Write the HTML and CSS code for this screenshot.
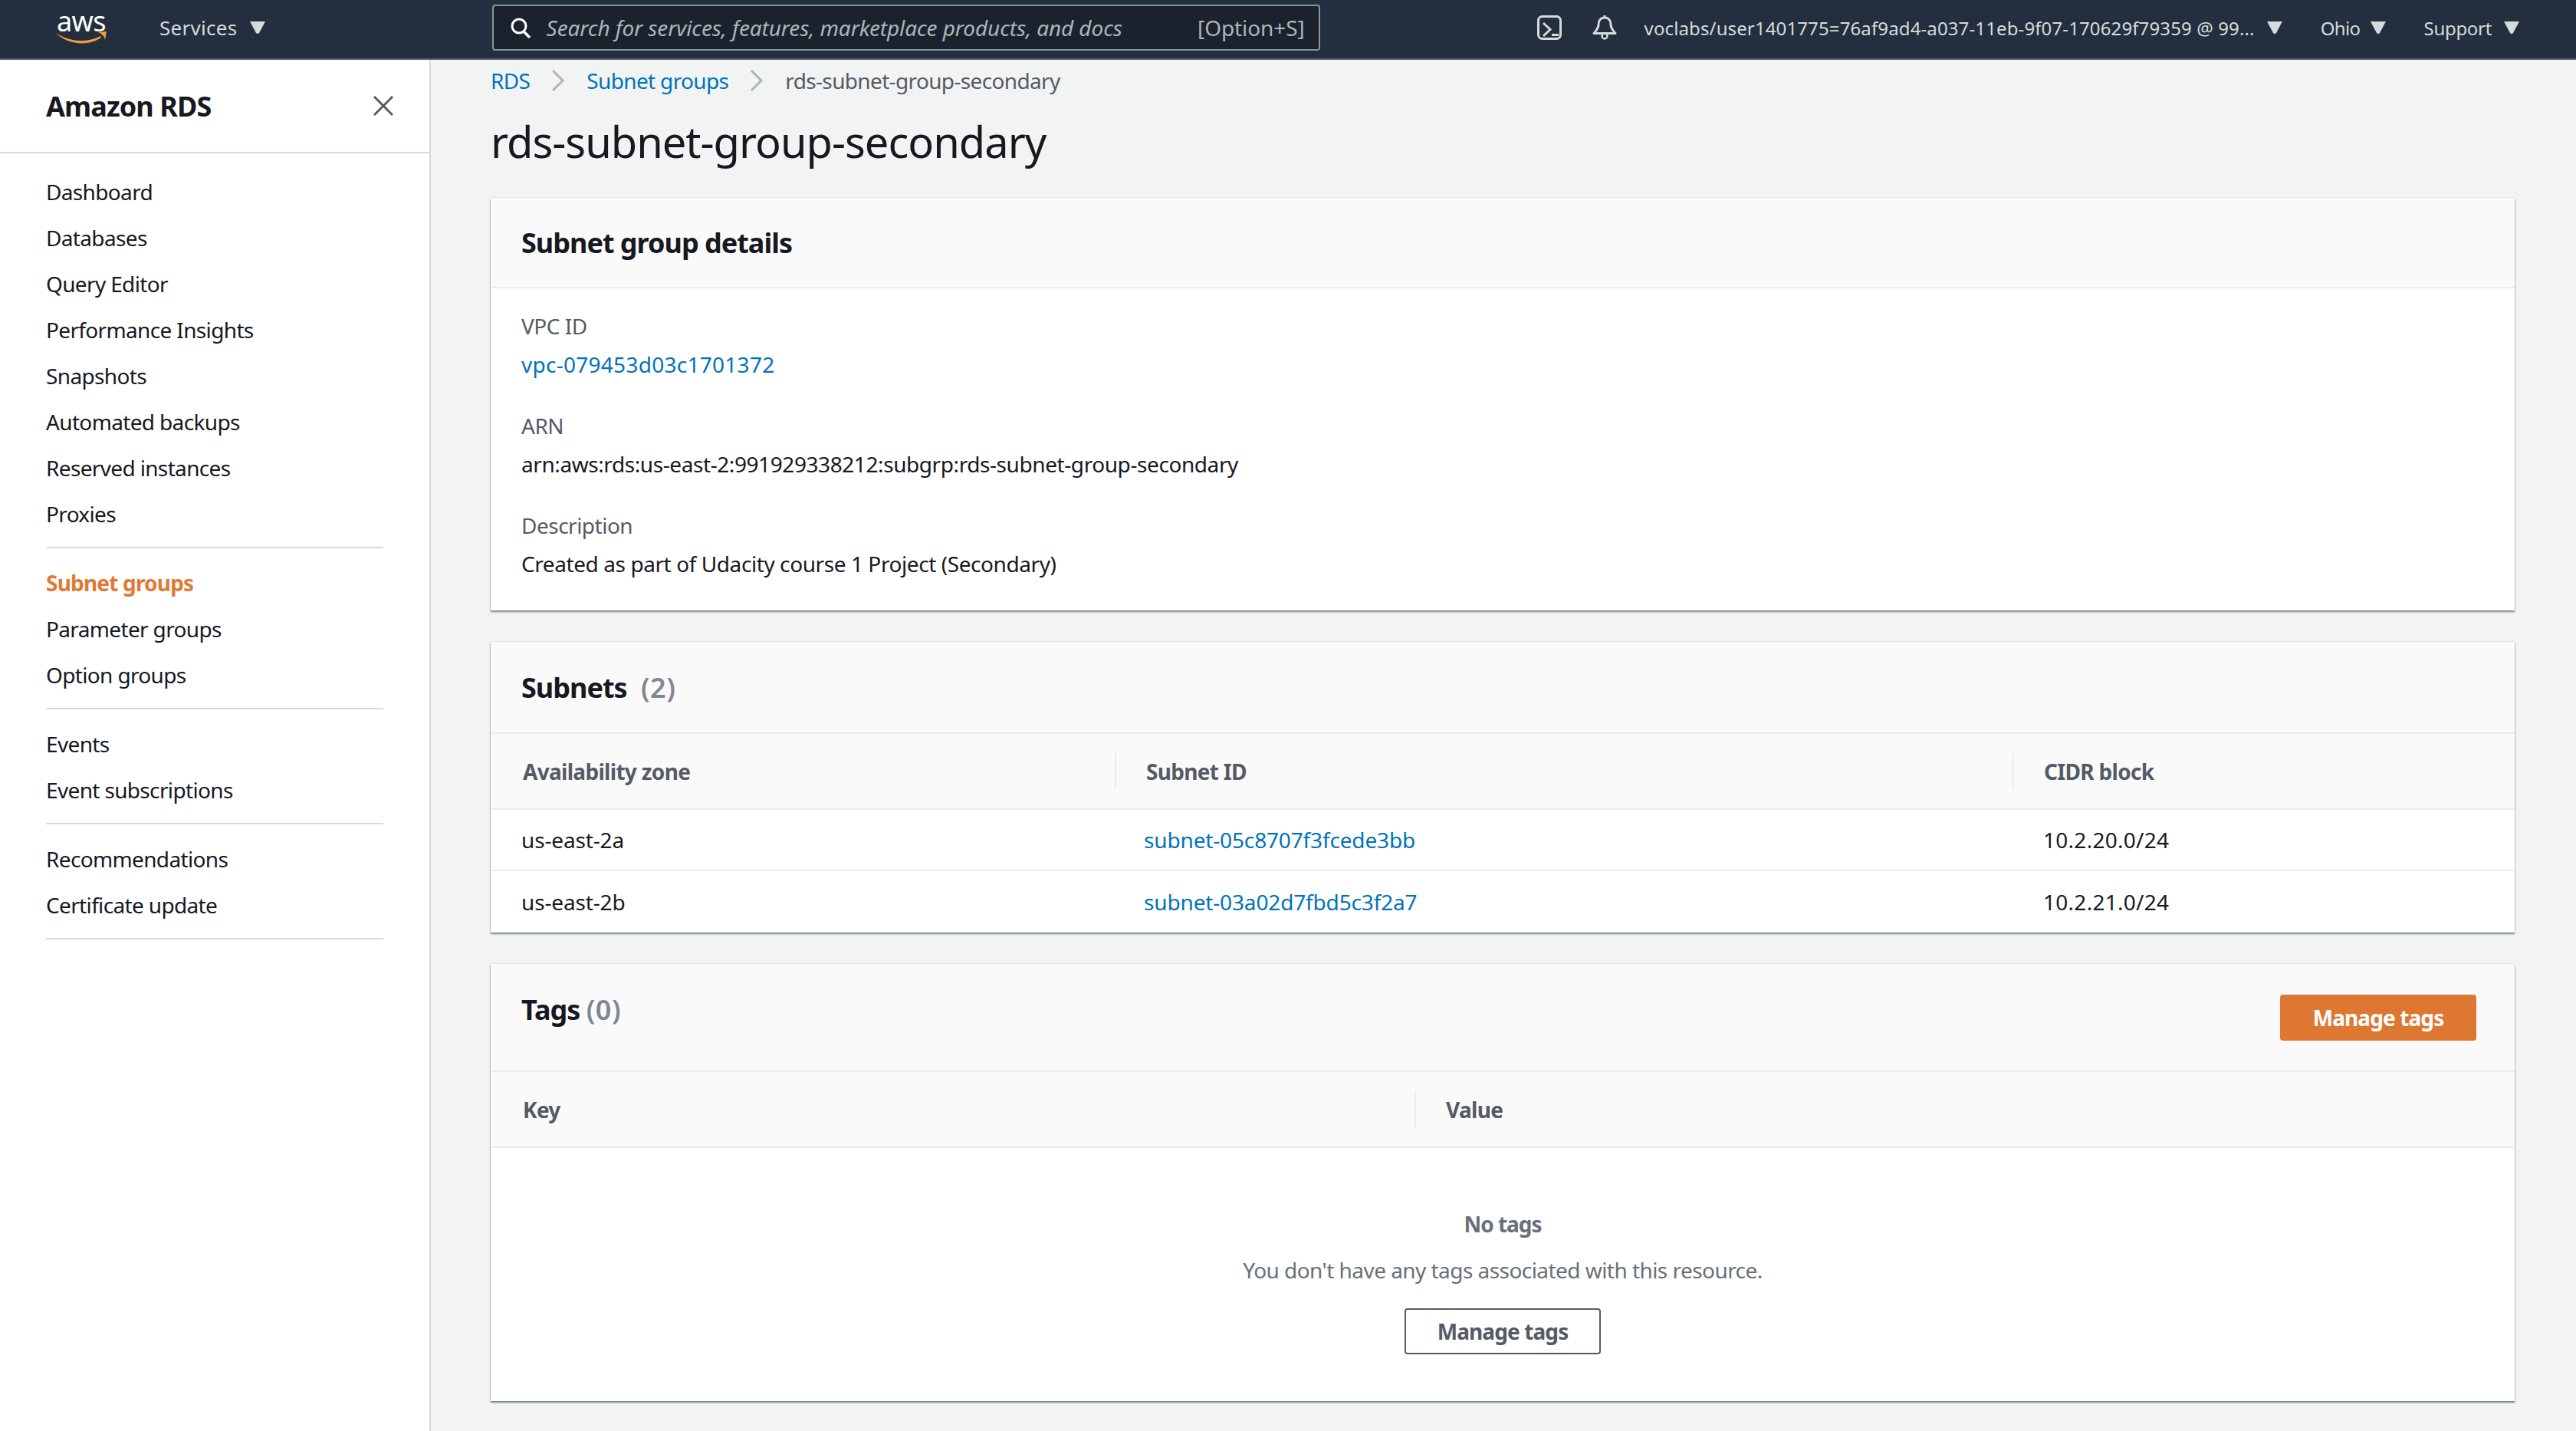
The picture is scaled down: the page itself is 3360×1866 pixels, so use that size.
FILE: index.html
```html
<!DOCTYPE html>
<html lang="en">
<head>
  <meta charset="UTF-8">
  <title>rds-subnet-group-secondary</title>
  <link rel="stylesheet" href="styles.css">
</head>
<body>

<header class="topbar">
  <a class="logo">
    <span class="logo-text">aws</span>
    <svg class="logo-smile" viewBox="0 0 66 16" width="66" height="16">
      <path d="M0 2C16 13 40 16 58 6L59 8C42 20 14 17 0 2Z" fill="#f29d38"/>
      <path d="M55 1L66 0L64 11C63.500 7 60 3 55 1Z" fill="#f29d38"/>
    </svg>
  </a>
  <a class="menu services">Services<svg class="caret" viewBox="0 0 20 16"><path d="M0 0H20L12 15Q10 17 8 15Z"/></svg></a>
  <div class="search">
    <svg class="search-icon" viewBox="0 0 28 28"><circle cx="12" cy="12" r="9" fill="none" stroke="#fff" stroke-width="3"/><path d="M18 19L26 27" stroke="#fff" stroke-width="3.500"/></svg>
    <span class="search-text">Search for services, features, marketplace products, and docs</span>
    <span class="search-key">[Option+S]</span>
  </div>
  <svg class="terminal" viewBox="0 0 32 32"><rect x="1.500" y="1.500" width="29" height="29" rx="5" fill="none" stroke="#d5dbdb" stroke-width="3"/><path d="M8 10L17 18.500L8 27M19 25.500H28" fill="none" stroke="#d5dbdb" stroke-width="3"/></svg>
  <svg class="bell" viewBox="0 0 32 32"><circle cx="16" cy="27" r="3.500" fill="none" stroke="#d5dbdb" stroke-width="2.500"/><path d="M16 3C10 3 8 8 8 12C8 17 5 20 2 23.500H30C27 20 24 17 24 12C24 8 22 3 16 3Z" fill="#232f3e" stroke="#d5dbdb" stroke-width="3" stroke-linejoin="round"/><path d="M16 0V3" stroke="#d5dbdb" stroke-width="3"/></svg>
  <a class="menu user">voclabs/user1401775=76af9ad4-a037-11eb-9f07-170629f79359 @ 99...<svg class="caret" viewBox="0 0 20 16"><path d="M0 0H20L12 15Q10 17 8 15Z"/></svg></a>
  <a class="menu region">Ohio<svg class="caret" viewBox="0 0 20 16"><path d="M0 0H20L12 15Q10 17 8 15Z"/></svg></a>
  <a class="menu support">Support<svg class="caret" viewBox="0 0 20 16"><path d="M0 0H20L12 15Q10 17 8 15Z"/></svg></a>
</header>

<div class="layout">
  <nav class="sidebar">
    <div class="side-head">
      <span class="side-title">Amazon RDS</span>
      <svg class="side-close" viewBox="0 0 26 26"><path d="M1 1L25 25M25 1L1 25" fill="none" stroke="#545b64" stroke-width="3"/></svg>
    </div>
    <ul class="side-list">
      <li>Dashboard</li>
      <li>Databases</li>
      <li>Query Editor</li>
      <li>Performance Insights</li>
      <li>Snapshots</li>
      <li>Automated backups</li>
      <li>Reserved instances</li>
      <li>Proxies</li>
    </ul>
    <ul class="side-list">
      <li class="active">Subnet groups</li>
      <li>Parameter groups</li>
      <li>Option groups</li>
    </ul>
    <ul class="side-list">
      <li>Events</li>
      <li>Event subscriptions</li>
    </ul>
    <ul class="side-list">
      <li>Recommendations</li>
      <li>Certificate update</li>
    </ul>
  </nav>

  <main class="content">
    <div class="crumbs">
      <a class="link">RDS</a>
      <svg class="crumb-sep" viewBox="0 0 18 28"><path d="M2 1L15 14L2 27" fill="none" stroke="#aab7b8" stroke-width="3"/></svg>
      <a class="link">Subnet groups</a>
      <svg class="crumb-sep" viewBox="0 0 18 28"><path d="M2 1L15 14L2 27" fill="none" stroke="#aab7b8" stroke-width="3"/></svg>
      <span class="crumb-last">rds-subnet-group-secondary</span>
    </div>
    <h1 class="page-title">rds-subnet-group-secondary</h1>

    <section class="card">
      <div class="card-head first"><h2>Subnet group details</h2></div>
      <div class="details">
        <div class="field"><div class="field-label">VPC ID</div><a class="link digits">vpc-079453d03c1701372</a></div>
        <div class="field"><div class="field-label">ARN</div><div class="field-value">arn:aws:rds:us-east-2:991929338212:subgrp:rds-subnet-group-secondary</div></div>
        <div class="field"><div class="field-label">Description</div><div class="field-value">Created as part of Udacity course 1 Project (Secondary)</div></div>
      </div>
    </section>

    <section class="card">
      <div class="card-head"><h2>Subnets <span class="count wide">(2)</span></h2></div>
      <div class="table-row table-head subnets">
        <div class="cell">Availability zone</div>
        <div class="cell">Subnet ID</div>
        <div class="cell">CIDR block</div>
      </div>
      <div class="table-row subnets">
        <div class="cell mixed">us-east-2a</div>
        <div class="cell link-cell"><a class="link mixed">subnet-05c8707f3fcede3bb</a></div>
        <div class="cell digits">10.2.20.0/24</div>
      </div>
      <div class="table-row subnets last">
        <div class="cell mixed">us-east-2b</div>
        <div class="cell link-cell"><a class="link mixed">subnet-03a02d7fbd5c3f2a7</a></div>
        <div class="cell digits">10.2.21.0/24</div>
      </div>
    </section>

    <section class="card">
      <div class="card-head tags-head">
        <h2>Tags <span class="count">(0)</span></h2>
        <button class="btn primary">Manage tags</button>
      </div>
      <div class="table-row table-head tags">
        <div class="cell">Key</div>
        <div class="cell">Value</div>
      </div>
      <div class="empty">
        <div class="empty-title">No tags</div>
        <div class="empty-text">You don't have any tags associated with this resource.</div>
        <button class="btn">Manage tags</button>
      </div>
    </section>
  </main>
</div>

</body>
</html>
```

FILE: styles.css
```css
* { box-sizing: border-box; }
html, body { height: 100%; }
body {
  margin: 0;
  font-family: 'Noto Sans', 'Open Sans', sans-serif;
  font-size: 28px;
  letter-spacing: -0.5px;
  color: #16191f;
  background: #f2f3f3;
  overflow: hidden;
}
a { text-decoration: none; }
ul { list-style: none; margin: 0; padding: 0; }
h1, h2 { margin: 0; }

.digits { letter-spacing: 0.27px; }
.mixed { letter-spacing: -0.15px; }

/* top bar */
.topbar {
  height: 78px;
  display: flex;
  align-items: center;
  padding-bottom: 4px;
  background: #232f3e;
  border-bottom: 2px solid #545b64;
  color: #d5dbdb;
  font-size: 24px;
  letter-spacing: 0.12px;
}
.logo {
  width: 66px;
  margin-left: 73px;
  display: flex;
  flex-direction: column;
  align-items: center;
}
.logo-text {
  font-size: 36px;
  line-height: 26px;
  letter-spacing: -0.5px;
  color: #fff;
}
.logo-smile { display: block; }
.menu {
  display: flex;
  align-items: center;
  white-space: nowrap;
}
.caret {
  width: 20px;
  height: 16px;
  margin-left: 16px;
  fill: #d5dbdb;
}
.services { margin-left: 69px; font-size: 26px; letter-spacing: 0.3px; }
.search {
  width: 1080px;
  height: 60px;
  margin-left: 296px;
  display: flex;
  align-items: center;
  background: #1b222d;
  border: 2px solid #879596;
  border-radius: 4px;
  padding: 0 18px 0 21px;
  font-size: 28px;
  letter-spacing: -0.1px;
  color: #aab7b8;
}
.search-icon { width: 28px; height: 28px; flex: none; }
.search-text {
  margin-left: 20px;
  flex: 1;
  font-style: italic;
}
.terminal { width: 32px; height: 32px; margin-left: 283px; }
.bell { width: 32px; height: 32px; margin-left: 40px; }
.user { margin-left: 36px; }
.region { margin-left: 50px; letter-spacing: -0.6px; }
.region .caret { margin-left: 13px; }
.support { margin-left: 50px; letter-spacing: -0.3px; }

/* layout */
.layout {
  display: flex;
  height: calc(100% - 78px);
}
.sidebar {
  width: 562px;
  flex: none;
  background: #fff;
  border-right: 2px solid #d5dbdb;
}
.side-head {
  height: 122px;
  display: flex;
  align-items: center;
  justify-content: space-between;
  padding: 0 47px 0 60px;
  border-bottom: 2px solid #d5dbdb;
}
.side-title { font-size: 36px; font-weight: 700; letter-spacing: -0.9px; }
.side-close { width: 26px; height: 26px; }
.side-list {
  margin: 0 60px;
  padding-bottom: 13px;
  border-bottom: 2px solid #d5dbdb;
  letter-spacing: -0.65px;
}
.side-list:first-of-type { padding-top: 20px; }
.side-list + .side-list { padding-top: 15px; }
.side-list li {
  height: 60px;
  line-height: 60px;
  white-space: nowrap;
}
.side-list li.active { color: #e07a33; font-weight: 700; letter-spacing: -0.8px; }

/* main */
.content {
  flex: 1;
  padding: 0 80px 0 78px;
}
.link { color: #0073bb; }
.crumbs {
  height: 54px;
  display: flex;
  align-items: center;
  letter-spacing: -0.65px;
}
.crumb-sep { width: 18px; height: 28px; margin: 0 28px; }
.crumb-last { color: #545b64; }
.page-title {
  font-size: 56px;
  font-weight: 400;
  letter-spacing: -1px;
  line-height: 80px;
  margin: 12px 0 34px;
}

.card {
  background: #fff;
  margin-bottom: 41px;
  box-shadow: 0 2px 2px rgba(0, 28, 36, 0.5), 0 0 2px rgba(0, 28, 36, 0.15);
}
.card-head {
  background: #fafafa;
  border-bottom: 2px solid #eaeded;
  padding: 0 40px;
  height: 120px;
  display: flex;
  align-items: center;
}
.card-head.first { height: 118px; }
.card-head h2 { font-size: 36px; font-weight: 700; letter-spacing: -1px; }
.count { color: #7f8790; font-weight: 600; letter-spacing: 0.5px; }
.count.wide { margin-left: 10px; }
.tags-head {
  height: 141px;
  justify-content: space-between;
  padding-right: 50px;
}
.tags-head h2 { margin-bottom: 20px; }

.details { padding: 19px 40px 30px; }
.field { height: 130px; padding-top: 10px; }
.field:last-child { height: 111px; }
.field-label { color: #545b64; height: 50px; line-height: 40px; }
.field-value { line-height: 40px; letter-spacing: -0.42px; }
.field .link { line-height: 40px; }

.table-row {
  display: grid;
  align-items: center;
  border-bottom: 2px solid #eaeded;
  height: 80px;
}
.table-row.last { border-bottom: 0; }
.subnets { grid-template-columns: 814px 1171px 1fr; }
.tags { grid-template-columns: 1205px 1fr; }
.table-row.table-head {
  height: 99px;
  background: #fafafa;
  color: #545b64;
  font-weight: 700;
  letter-spacing: -0.7px;
}
.cell { padding-left: 40px; }
.cell.link-cell { padding-left: 38px; }
.table-head .cell {
  height: 48px;
  line-height: 48px;
  padding-left: 39px;
  border-left: 2px solid #eaeded;
}
.table-head .cell:first-child { border-left: 0; padding-left: 42px; }

.btn {
  width: 256px;
  height: 60px;
  font-family: inherit;
  font-size: 28px;
  font-weight: 700;
  letter-spacing: -0.9px;
  background: #fff;
  color: #545b64;
  border: 2px solid #545b64;
  border-radius: 4px;
  padding: 0;
}
.btn.primary {
  background: #dd7731;
  color: #fff;
  border: 0;
}
.empty {
  height: 330px;
  padding-top: 79px;
  text-align: center;
  color: #687078;
}
.empty-title { font-weight: 700; line-height: 40px; letter-spacing: -1px; }
.empty-text { line-height: 40px; margin-top: 20px; margin-bottom: 30px; letter-spacing: -0.55px; }
```
